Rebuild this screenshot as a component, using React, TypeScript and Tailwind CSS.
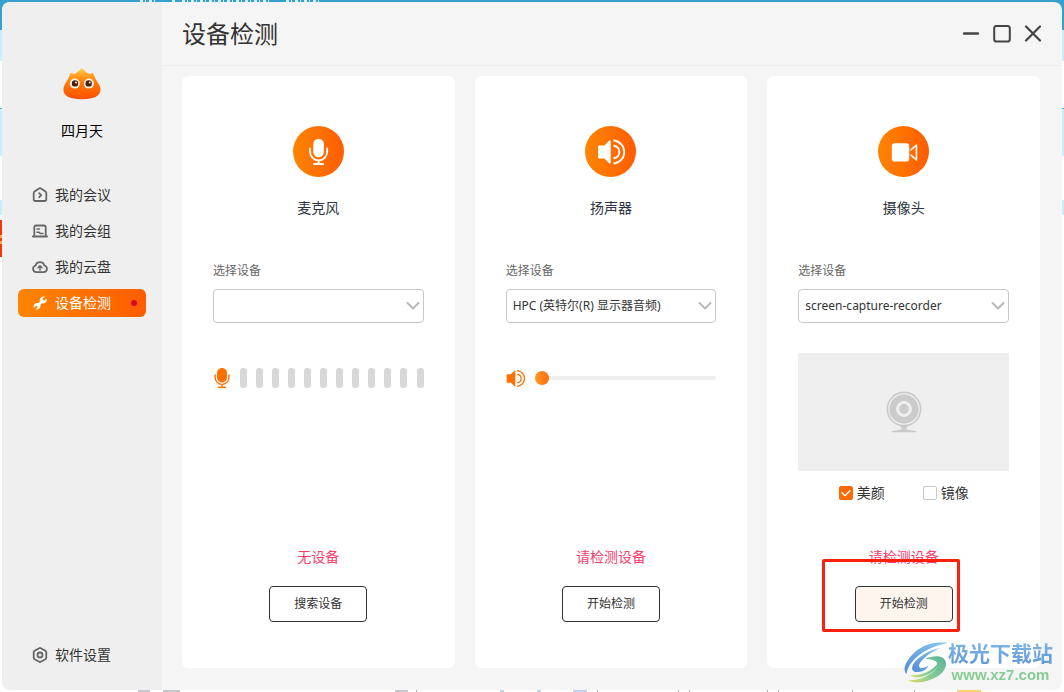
import { useId, useState, type ReactNode } from 'react';

function Mascot() {
  return (
    <svg width="38" height="32" viewBox="0 0 38 32" role="img" aria-label="头像">
      <defs>
        <linearGradient id="crown" x1="0" y1="0" x2="0" y2="1">
          <stop offset="0" stopColor="#ffcf45" />
          <stop offset="0.25" stopColor="#ff9c20" />
          <stop offset="0.45" stopColor="#ff7a08" />
          <stop offset="1" stopColor="#fc5000" />
        </linearGradient>
      </defs>
      <path
        fill="url(#crown)"
        d="M7.200 5.600c.2-.6.7-.8 1.200-.5 1.300.8 2.600.8 3.800.3 2.200-.9 4-2.600 5.600-4.300.7-.7 1.300-.7 2 0 1.600 1.700 3.400 3.400 5.600 4.300 1.200.5 2.500.5 3.800-.3.500-.3 1-.1 1.200.5.700 2.900 2 5.200 4 8.400 1.700 2.500 3.100 4.700 3.100 7.300 0 6.700-5.800 9.900-18.700 9.900S.4 28 .4 21.300c0-2.600 1.300-4.800 2.900-7.300 1.900-3.200 3.200-5.500 3.900-8.400z"
      />
      <circle cx="11.800" cy="15.600" r="5" fill="#fff3e4" />
      <circle cx="25.900" cy="15.600" r="5" fill="#fff3e4" />
      <circle cx="12" cy="15.400" r="3.200" fill="#4a1d0c" />
      <circle cx="25.700" cy="15.400" r="3.200" fill="#4a1d0c" />
      <circle cx="13" cy="14.400" r="1" fill="#fff" />
      <circle cx="26.700" cy="14.400" r="1" fill="#fff" />
    </svg>
  );
}

function Icon({ children }: { children: ReactNode }) {
  return (
    <svg
      width="16"
      height="16"
      viewBox="0 0 16 16"
      fill="none"
      stroke="currentColor"
      strokeWidth="1.800"
      strokeLinecap="round"
      strokeLinejoin="round"
      aria-hidden="true"
    >
      {children}
    </svg>
  );
}

const homeIcon = (
  <Icon>
    <path d="M7 1.500 2.600 4.500C2 4.900 1.700 5.400 1.700 6v6.200c0 1 .8 1.800 1.800 1.800h9c1 0 1.800-.8 1.800-1.800V6c0-.6-.3-1.100-.9-1.500L9 1.500a1.800 1.800 0 0 0-2 0z" />
    <path d="m7.200 6.200 2 2-2 2" />
  </Icon>
);
const groupIcon = (
  <Icon>
    <path d="M2.300 13V4.300c0-1 .8-1.800 1.800-1.800h7.800c1 0 1.800.8 1.800 1.800V13M.9 13.500h14.200" />
    <path strokeWidth="1.500" d="M5 6h2.500M5 9.200h2.200l.8 1.200h3" />
  </Icon>
);
const cloudIcon = (
  <Icon>
    <path d="M4.400 13.200a3.400 3.400 0 0 1-.7-6.700 4.400 4.400 0 0 1 8.600 0 3.400 3.400 0 0 1-.7 6.700z" />
    <path strokeWidth="1.500" d="M8 11V7.200M6 8.800l2-1.900 2 1.900" />
  </Icon>
);
const wrenchIcon = (
  <svg width="16" height="16" viewBox="0 0 16 16" fill="currentColor" aria-hidden="true">
    <path d="M12.800 1.700 10.700 3.800l.2 1.500 1.500.2 2.100-2.100c.5 1.600.1 3.100-.9 4-.9.9-2.100 1.200-3.300.9-1 .3-1.700 1-2 2 .3 1.200 0 2.400-.9 3.200-1 1-2.500 1.300-3.900.8l1.900-1.900-.2-1.300-1.400-.2-2 2c-.5-1.500-.1-2.900.8-3.900.9-.8 2-1.100 3.200-.8 1-.3 1.700-1 2-2-.3-1.200.1-2.500.9-3.400 1-1 2.600-1.500 4.100-1.100z" />
  </svg>
);
const settingsIcon = (
  <Icon>
    <path d="M7.200 1.200a1.700 1.700 0 0 1 1.600 0l4.600 2.600c.5.300.9.900.9 1.500v5.400c0 .6-.4 1.200-.9 1.500l-4.600 2.600a1.700 1.700 0 0 1-1.600 0l-4.600-2.600c-.5-.3-.9-.9-.9-1.500V5.300c0-.6.4-1.200.9-1.500z" />
    <circle cx="8" cy="8" r="2.500" />
  </Icon>
);

const nav = [
  { label: '我的会议', icon: homeIcon },
  { label: '我的会组', icon: groupIcon },
  { label: '我的云盘', icon: cloudIcon },
  { label: '设备检测', icon: wrenchIcon, active: true },
];

function NavLink({ label, icon, active }: { label: string; icon: ReactNode; active?: boolean }) {
  return (
    <a
      href="#"
      aria-current={active ? 'page' : undefined}
      className={
        active
          ? 'flex h-7 items-center gap-[7px] rounded-md bg-linear-to-r from-[#ff8400] to-[#ff5c00] pr-[9px] pl-[14px] text-white'
          : 'flex h-7 items-center gap-[7px] rounded-md pr-[9px] pl-[14px] text-[#333]'
      }
    >
      <span className={active ? '' : 'text-[#666]'}>{icon}</span>
      <span>{label}</span>
      {active && <span className="ml-auto size-1.5 rounded-full bg-[#d8082e]" />}
    </a>
  );
}

function MicShape() {
  return (
    <svg width="28" height="28" viewBox="0 0 28 28" fill="none" stroke="currentColor" strokeWidth="1.800" strokeLinecap="round" aria-hidden="true">
      <rect x="9.300" y="0.700" width="10.600" height="18.500" rx="5.300" fill="currentColor" stroke="none" />
      <path d="M6 10.500v3.300a8.600 8.600 0 0 0 17.200 0v-3.300M14.600 22.500V26M10 26h9.200" />
    </svg>
  );
}

function SmallMic() {
  return (
    <svg width="18" height="20" viewBox="0 0 18 20" fill="none" stroke="currentColor" strokeWidth="1.400" strokeLinecap="round" aria-hidden="true">
      <rect x="4" y="0" width="10" height="14.500" rx="5" fill="currentColor" stroke="none" />
      <path d="M2.100 7v2.500a6.900 6.900 0 0 0 13.800 0V7M9 16.500V19M5.500 19.200h7" />
    </svg>
  );
}

function SpeakerShape({ width }: { width: number }) {
  return (
    <svg width={width} height={width} viewBox="0 0 28 28" fill="none" stroke="currentColor" strokeWidth="1.900" strokeLinecap="round" aria-hidden="true">
      <path fill="currentColor" stroke="none" d="M2 7.600h5.300l5.100-5c.6-.5 1.300-.2 1.300.6v21.600c0 .8-.7 1.100-1.300.6l-5.100-5H2c-.6 0-1-.4-1-1V8.600c0-.6.400-1 1-1z" />
      <path d="M17.200 7.800a6.300 6.300 0 0 1 0 12.400M17.200 2.500a11.600 11.600 0 0 1 0 23" />
    </svg>
  );
}

function CameraShape() {
  return (
    <svg width="28" height="28" viewBox="0 0 28 28" fill="none" stroke="currentColor" strokeWidth="1.600" strokeLinejoin="round" aria-hidden="true">
      <rect x="1.800" y="5.200" width="17.400" height="18.400" rx="2.800" fill="currentColor" stroke="none" />
      <path d="M21 11.800 26.400 7v15L21 17.200" strokeLinecap="round" />
    </svg>
  );
}

function WebcamShape() {
  return (
    <svg width="36" height="42" viewBox="0 0 36 42" aria-hidden="true">
      <path fill="#cbcbcb" d="M11 33h14c-3 2-4.800 3.400-4.800 4.800 1 1.300 5 1.700 9.500 2.100.7.100.7 1.300 0 1.300H6.300c-.7 0-.7-1.200 0-1.300 4.500-.4 8.500-.8 9.500-2.100 0-1.400-1.800-2.800-4.800-4.800z" />
      <circle cx="18" cy="18" r="17.500" fill="#cbcbcb" />
      <circle cx="18" cy="18" r="15.200" fill="none" stroke="#efefef" strokeWidth="1.200" />
      <circle cx="18" cy="18" r="6.400" fill="none" stroke="#efefef" strokeWidth="3" />
    </svg>
  );
}

function Check({ label, initial }: { label: string; initial: boolean }) {
  const [on, setOn] = useState(initial);
  return (
    <label className="flex items-center gap-1 text-sm text-[#333]">
      <span className="grid size-3.5 place-items-center *:col-start-1 *:row-start-1">
        <input
          type="checkbox"
          checked={on}
          onChange={(e) => setOn(e.target.checked)}
          className="size-3.5 appearance-none rounded-xs border border-[#c8c8c8] bg-white checked:border-[#ff6a00] checked:bg-[#ff6a00]"
        />
        {on && (
          <svg width="10" height="10" viewBox="0 0 10 10" className="pointer-events-none" fill="none" stroke="#fff" strokeWidth="1.400" strokeLinecap="round" strokeLinejoin="round" aria-hidden="true">
            <path d="M1 4.800 4 7.800 9 2.800" />
          </svg>
        )}
      </span>
      {label}
    </label>
  );
}

type CardProps = {
  title: string;
  icon: ReactNode;
  options: string[];
  status: string;
  action: string;
  highlighted?: boolean;
  children: ReactNode;
};

function DeviceCard({ title, icon, options, status, action, highlighted, children }: CardProps) {
  const id = useId();
  return (
    <section className="flex min-w-0 flex-col rounded-md bg-white px-[31px] pt-[50px] pb-[46px]">
      <div className="grid size-[51px] place-items-center self-center rounded-full bg-linear-to-r from-[#ff8400] to-[#ff5c00] text-white">
        {icon}
      </div>
      <h2 className="mt-[21px] text-center text-sm text-[#2b3440]">{title}</h2>
      <label htmlFor={id} className="mt-[43px] text-xs leading-5 text-[#666]">
        选择设备
      </label>
      <div className="mt-2 grid items-center *:col-start-1 *:row-start-1">
        <select id={id} className="h-[34px] w-full min-w-0 appearance-none rounded-sm border border-[#c8c8c8] bg-white pr-6 pl-1.5 text-xs text-[#333]">
          {options.map((o) => (
            <option key={o}>{o}</option>
          ))}
        </select>
        <svg width="14" height="10" viewBox="0 0 14 10" className="pointer-events-none mr-1 justify-self-end" fill="none" stroke="#b8b8b8" strokeWidth="2" strokeLinecap="round" strokeLinejoin="round" aria-hidden="true">
          <path d="M1.500 2 7 7.500 12.500 2" />
        </svg>
      </div>
      {children}
      <p className="mt-auto text-center text-sm text-[#f5416c]">{status}</p>
      <div className="relative mt-[19px] self-center">
        <button
          type="button"
          className={
            highlighted
              ? 'h-9 w-[98px] rounded-sm border border-[#333] bg-[#fff5ef] text-xs text-[#333]'
              : 'h-9 w-[98px] rounded-sm border border-[#333] bg-white text-xs text-[#333]'
          }
        >
          {action}
        </button>
        {highlighted && (
          <span className="pointer-events-none absolute -top-[27px] -right-[7px] -bottom-[10px] -left-[33px] rounded-xs border-3 border-[#fe1f0d]" />
        )}
      </div>
    </section>
  );
}

function Watermark() {
  return (
    <div className="pointer-events-none absolute right-[11px] bottom-[7px] flex items-center opacity-90">
      <svg width="44" height="42" viewBox="0 0 44 42" aria-hidden="true">
        <defs>
          <linearGradient id="swooshTop" x1="0" y1="1" x2="1" y2="0">
            <stop offset="0" stopColor="#3f7fd0" />
            <stop offset="1" stopColor="#7cc4ee" />
          </linearGradient>
          <linearGradient id="swooshBottom" x1="0" y1="1" x2="1" y2="0">
            <stop offset="0" stopColor="#d9dd4e" />
            <stop offset="0.400" stopColor="#7cc98a" />
            <stop offset="1" stopColor="#47ac8c" />
          </linearGradient>
        </defs>
        <path fill="url(#swooshTop)" d="M43.500 1C29-1 16 4 8 13 0 22-1 28 2.500 32 3 26 7 20 14 14 23 7 32 3.500 43.500 1z" />
        <path fill="url(#swooshTop)" d="M36 6C25 8 14 15 10 21c-4 6-1 9.500 4 9 5 0 9-3 10.500-6.500-4 3-9 3.500-9.500.5 0-3 4-7 9-11 5-3.500 8-5 12-7z" />
        <path fill="url(#swooshBottom)" d="M21 17c8-4 18-4 20.500 2 2.500 7-4.500 15-14.500 18.500-9 3.500-18 4-23.500.5C13 39 22 35.500 29 30c7-6 7-13-8-13z" />
        <path fill="url(#swooshBottom)" d="M35 20c-1 7-9 13-18 15-5 1-9 0-11-2 9 1 21-2 29-13z" />
      </svg>
      <div className="flex flex-col items-center">
        <span className="bg-linear-to-b from-[#71b0e6] to-[#528fd0] bg-clip-text text-[21px] leading-6 font-bold text-transparent">极光下载站</span>
        <span className="font-['Liberation_Sans',sans-serif] text-[15px] leading-5 font-bold text-[#7cc88a]">www.xz7.com</span>
      </div>
    </div>
  );
}

export default function App() {
  const [volume, setVolume] = useState(0);
  return (
    <div className="relative flex min-h-screen bg-white bg-[linear-gradient(#35a0cb_0_30px,#c8eefc_30px_61px,#fff_61px_108px,#54b4d8_108px_109px,#c8eefc_109px_156px,#fff_156px_200px,#c8eefc_200px_215px,#fff_215px)] p-0.5 font-['Noto_Sans','Noto_Sans_CJK_SC',sans-serif]">
      <svg className="absolute top-0 left-[140px]" width="184" height="2" aria-hidden="true">
        <path d="M0 1h17M32 1h3M42 1h88M146 1h36" stroke="#d8eef7" strokeWidth="2" strokeDasharray="3 2 1 3" />
      </svg>
      <svg className="absolute top-[220px] left-0" width="2" height="37" aria-hidden="true">
        <path d="M1 0v37" stroke="#f03a0c" strokeWidth="2" />
        <path d="M1 15v3M1 21v3" stroke="#ffad55" strokeWidth="2" />
      </svg>
      <svg className="absolute bottom-0 left-[138px]" width="846" height="2" aria-hidden="true">
        <path d="M0 1h12M25 1h17M257 1h13" stroke="#8e9298" strokeWidth="1" />
        <path d="M362 1h4M399 1h4M435 1h14" stroke="#7ea6ee" strokeWidth="1" />
        <path d="M278 1h1M459 1h1M540 1h1M551 1h1M629 1h1M640 1h1M714 1h1M776 1h1" stroke="#aaa" strokeWidth="2" />
        <path d="M819 1h24" stroke="#ffd36b" strokeWidth="2" />
      </svg>

      <div className="relative flex min-w-0 flex-1 overflow-hidden rounded-lg bg-[#f5f5f5]">
        <aside className="flex w-40 shrink-0 flex-col bg-[#efefef] px-4 pt-[66px] pb-[21px] text-sm">
          <div className="flex flex-col items-center gap-[19px] text-black">
            <Mascot />
            <span className="leading-6">四月天</span>
          </div>
          <nav className="mt-[38px] flex flex-col gap-2">
            {nav.map((n) => (
              <NavLink key={n.label} {...n} />
            ))}
          </nav>
          <div className="mt-auto">
            <NavLink label="软件设置" icon={settingsIcon} />
          </div>
        </aside>

        <div className="flex min-w-0 flex-1 flex-col">
          <header className="flex h-16 items-center justify-between border-b border-[#ededed] pr-5 pl-5">
            <h1 className="text-2xl text-[#333]">设备检测</h1>
            <div className="flex gap-[13px] text-[#444]">
              <button type="button" aria-label="最小化">
                <svg width="18" height="18" viewBox="0 0 18 18" stroke="currentColor" strokeWidth="2.600" strokeLinecap="round" aria-hidden="true">
                  <path d="M2.200 8.500h13.600" />
                </svg>
              </button>
              <button type="button" aria-label="最大化">
                <svg width="18" height="18" viewBox="0 0 18 18" fill="none" stroke="currentColor" strokeWidth="2" aria-hidden="true">
                  <rect x="1.200" y="1" width="15.600" height="15.600" rx="2.400" />
                </svg>
              </button>
              <button type="button" aria-label="关闭">
                <svg width="18" height="18" viewBox="0 0 18 18" stroke="currentColor" strokeWidth="2.200" strokeLinecap="round" aria-hidden="true">
                  <path d="m2 1.500 14 14M16 1.500l-14 14" />
                </svg>
              </button>
            </div>
          </header>

          <main className="grid flex-1 grid-cols-3 gap-5 pt-2.5 pr-[22px] pb-[22px] pl-5">
            <DeviceCard title="麦克风" icon={<MicShape />} options={['']} status="无设备" action="搜索设备">
              <div className="mt-[45px] flex items-center gap-[9px] text-[#ff6f00]">
                <SmallMic />
                <div role="meter" aria-label="麦克风音量" aria-valuenow={0} aria-valuemin={0} aria-valuemax={12} className="flex flex-1 justify-between">
                  {Array.from({ length: 12 }, (_, i) => (
                    <span key={i} className="h-5 w-[7px] rounded-[3px] bg-[#d8d8d8]" />
                  ))}
                </div>
              </div>
            </DeviceCard>

            <DeviceCard title="扬声器" icon={<SpeakerShape width={28} />} options={['HPC (英特尔(R) 显示器音频)']} status="请检测设备" action="开始检测">
              <div className="mt-[45px] flex h-5 items-center gap-2.5 text-[#ff6f00]">
                <SpeakerShape width={19} />
                <input
                  type="range"
                  aria-label="扬声器音量"
                  min={0}
                  max={100}
                  value={volume}
                  onChange={(e) => setVolume(Number(e.target.value))}
                  className="h-1 min-w-0 flex-1 appearance-none rounded-full bg-[#efefef] [&::-webkit-slider-thumb]:size-3.5 [&::-webkit-slider-thumb]:appearance-none [&::-webkit-slider-thumb]:rounded-full [&::-webkit-slider-thumb]:bg-linear-to-r [&::-webkit-slider-thumb]:from-[#ff9a1f] [&::-webkit-slider-thumb]:to-[#ff6a10]"
                />
              </div>
            </DeviceCard>

            <DeviceCard title="摄像头" icon={<CameraShape />} options={['screen-capture-recorder']} status="请检测设备" action="开始检测" highlighted>
              <div className="mt-[30px] grid h-[118px] place-items-center bg-[#efefef]">
                <WebcamShape />
              </div>
              <div className="mt-3 flex justify-center gap-[38px]">
                <Check label="美颜" initial={true} />
                <Check label="镜像" initial={false} />
              </div>
            </DeviceCard>
          </main>
        </div>
      </div>
      <Watermark />
    </div>
  );
}
